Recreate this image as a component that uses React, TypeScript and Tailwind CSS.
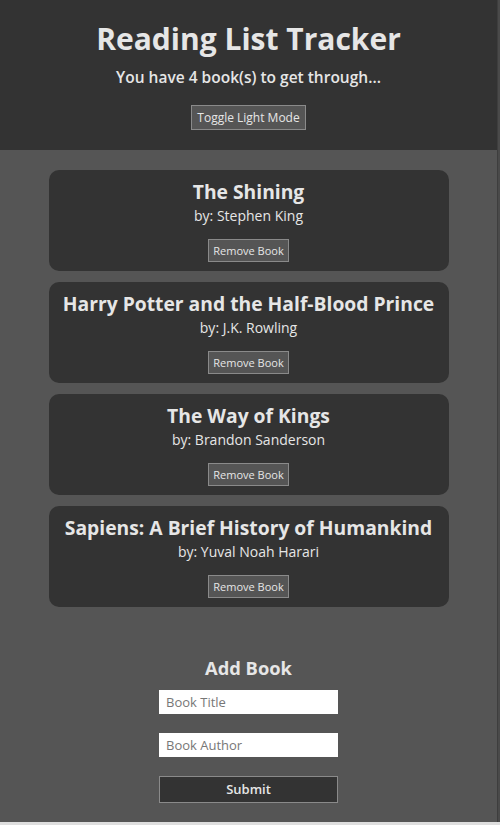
const books = [
  { title: "The Shining", author: "Stephen King" },
  { title: "Harry Potter and the Half-Blood Prince", author: "J.K. Rowling" },
  { title: "The Way of Kings", author: "Brandon Sanderson" },
  { title: "Sapiens: A Brief History of Humankind", author: "Yuval Noah Harari" },
];

export default function App() {
  return (
    <div className="min-h-[825px] bg-[#dedede] font-['Open_Sans',sans-serif] text-[#e6e6e6]">
      <div className="flex bg-[#4a4a4a]">
        <div className="flex w-[498px] flex-col border-r border-[#3e3e3e] pb-[19px] bg-[#555555]">
          {/* Header */}
          <header className="flex h-[150px] flex-col items-center bg-[#333333] pt-[19px]">
            <h1 className="text-[30px] font-bold leading-[40px]">Reading List Tracker</h1>
            <p className="mt-[7px] text-[15.5px] font-semibold leading-[22px]">
              You have {books.length} book(s) to get through...
            </p>
            <button className="mt-[17px] h-[25px] border border-[#8a8a8a] bg-[#555555] px-[5px] text-[12px] leading-none text-[#e6e6e6]">
              Toggle Light Mode
            </button>
          </header>

          {/* Books */}
          <div className="mx-auto mt-[20px] flex w-[400px] flex-col gap-[11px]">
            {books.map((b) => (
              <div
                key={b.title}
                className="flex h-[101px] flex-col items-center rounded-[10px] bg-[#333333] pt-[8px]"
              >
                <h2 className="text-[19.3px] font-bold leading-[28px]">{b.title}</h2>
                <p className="text-[14px] leading-[20px]">by: {b.author}</p>
                <button className="mt-[13px] h-[23px] border border-[#8a8a8a] bg-[#555555] px-[4px] text-[11px] leading-none text-[#e6e6e6]">
                  Remove Book
                </button>
              </div>
            ))}
          </div>

          {/* Add form */}
          <div className="mt-[47px] flex flex-col items-center">
            <h2 className="text-[18.3px] font-bold leading-[28px]">Add Book</h2>
            <input
              className="mt-[8px] h-[24px] w-[179px] bg-white px-[7px] text-[13px] text-black placeholder:text-[#777777] focus:outline-none"
              placeholder="Book Title"
            />
            <input
              className="mt-[19px] h-[24px] w-[179px] bg-white px-[7px] text-[13px] text-black placeholder:text-[#777777] focus:outline-none"
              placeholder="Book Author"
            />
            <button className="mt-[19px] h-[27px] w-[179px] border border-[#8a8a8a] bg-[#333333] text-[13px] font-semibold text-[#e6e6e6]">
              Submit
            </button>
          </div>
        </div>
      </div>
    </div>
  );
}
